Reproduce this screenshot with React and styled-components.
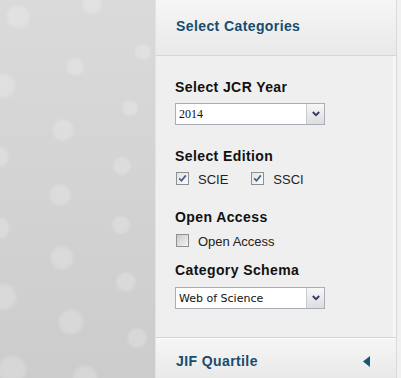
import React from "react";
import styled, { createGlobalStyle } from "styled-components";

const Global = createGlobalStyle`
  html, body { margin: 0; padding: 0; }
  body { font-family: "Liberation Sans", Arial, sans-serif; background: #d4d4d4; }
`;

const Page = styled.div`
  display: flex;
  width: 401px;
  height: 378px;
  overflow: hidden;
`;

const Backdrop = styled.div`
  width: 155px;
  flex: none;
  background: linear-gradient(#dadada, #cccccc);
  svg { display: block; }
`;

const Panel = styled.div`
  width: 242px;
  flex: none;
  box-sizing: border-box;
  display: flex;
  flex-direction: column;
  background: #efefef;
  border-left: 1px solid #e3e3e3;
  border-right: 1px solid #d9d9d9;
  box-shadow: inset -3px 0 0 #f6f6f6;
`;

const Strip = styled.div`
  flex: 1;
  background: #f1f1f1;
`;

const SectionHeader = styled.div`
  box-sizing: border-box;
  height: ${(p) => p.$h}px;
  padding: ${(p) => p.$pt}px 26px 0 20px;
  display: flex;
  justify-content: space-between;
  align-items: flex-start;
  background: linear-gradient(#f6f6f6, #e9e9e9);
  border-top: ${(p) => (p.$top ? "1px solid #d6d6d6" : "none")};
  border-bottom: ${(p) => (p.$top ? "none" : "1px solid #d6d6d6")};
  box-shadow: ${(p) => (p.$top ? "inset 0 1px 0 #fbfbfb" : "none")};
  font-size: 14px;
  letter-spacing: 0.4px;
  line-height: 15px;
  font-weight: bold;
  color: #174c6c;
`;

const Body = styled.div`
  flex: 1;
  padding: 24px 0 0 19px;
  display: flex;
  flex-direction: column;
`;

const Label = styled.div`
  font-size: 14px;
  letter-spacing: 0.4px;
  line-height: 15px;
  font-weight: bold;
  color: #111;
  margin-top: ${(p) => p.$mt || 0}px;
  margin-bottom: ${(p) => p.$mb || 8}px;
`;

const Dropdown = styled.div`
  box-sizing: border-box;
  width: 150px;
  height: 22px;
  border: 1px solid #a9aeb6;
  background: #fff;
  display: flex;
  align-items: stretch;
`;

const DropText = styled.span`
  flex: 1;
  padding-left: 3px;
  display: flex;
  align-items: center;
  color: #111;
  font-family: ${(p) => (p.$serif ? '"Liberation Serif", serif' : '"DejaVu Sans", sans-serif')};
  font-size: ${(p) => (p.$serif ? 12 : 11)}px;
`;

const DropButton = styled.span`
  width: 17px;
  border-left: 1px solid #c9cdd3;
  background: linear-gradient(#f7f7f7, #dcdde0);
  display: flex;
  align-items: center;
  justify-content: center;
`;

const CheckRow = styled.div`
  display: flex;
  gap: 22px;
  height: 15px;
`;

const CheckItem = styled.label`
  display: flex;
  align-items: flex-start;
  gap: 9px;
  font-size: 13px;
  line-height: 15px;
  color: #222;
`;

const Box = styled.span`
  box-sizing: border-box;
  width: 13px;
  height: 13px;
  margin-left: 1px;
  border: 1px solid #8e8f91;
  background: ${(p) =>
    p.$checked
      ? "linear-gradient(135deg, #e4e4e6, #fbfbfb)"
      : "linear-gradient(135deg, #c9c9c9, #f4f4f4)"};
  display: flex;
  align-items: center;
  justify-content: center;
`;

const Bubbles = () => {
  const dots = [
    [18, 17, 12], [92, 4, 10], [143, 52, 8], [75, 67, 9], [3, 86, 13],
    [130, 108, 8], [63, 130, 11], [-1, 157, 10], [122, 166, 9], [60, 195, 11],
    [-1, 228, 11], [121, 225, 9], [62, 258, 12], [126, 282, 10], [3, 297, 14],
    [71, 322, 13], [137, 338, 10], [12, 370, 15], [85, 378, 13],
  ];
  return (
    <svg width="155" height="378" viewBox="0 0 155 378">
      <defs>
        <radialGradient id="bub">
          <stop offset="0" stopColor="#fff" stopOpacity="0.22" />
          <stop offset="0.7" stopColor="#fff" stopOpacity="0.2" />
          <stop offset="1" stopColor="#fff" stopOpacity="0.02" />
        </radialGradient>
      </defs>
      {dots.map(([x, y, r], i) => (
        <circle key={i} cx={x} cy={y} r={r + 1} fill="url(#bub)" />
      ))}
    </svg>
  );
};

const Chevron = () => (
  <svg width="8" height="6" viewBox="0 0 8 6">
    <path d="M0.8 1 L4 4.2 L7.2 1" fill="none" stroke="#2d3b5c" strokeWidth="1.8" />
  </svg>
);

const Tick = () => (
  <svg width="9" height="9" viewBox="0 0 9 9">
    <path d="M1.2 4.4 L3.5 6.8 L7.8 1.4" fill="none" stroke="#4b5a8d" strokeWidth="1.7" />
  </svg>
);

const Select = ({ value, serif }) => (
  <Dropdown>
    <DropText $serif={serif}>{value}</DropText>
    <DropButton><Chevron /></DropButton>
  </Dropdown>
);

const Check = ({ checked, children }) => (
  <CheckItem>
    <Box $checked={checked}>{checked && <Tick />}</Box>
    {children}
  </CheckItem>
);

const LeftArrow = () => (
  <svg width="7" height="11" viewBox="0 0 7 11" style={{ marginTop: 2 }}>
    <path d="M7 0 L0 5.5 L7 11 Z" fill="#155778" />
  </svg>
);

export default function App() {
  return (
    <>
      <Global />
      <Page>
        <Backdrop><Bubbles /></Backdrop>
        <Panel>
          <SectionHeader $h={56} $pt={19}>Select Categories</SectionHeader>
          <Body>
            <Label>Select JCR Year</Label>
            <Select value="2014" serif />
            <Label $mt={24}>Select Edition</Label>
            <CheckRow>
              <Check checked>SCIE</Check>
              <Check checked>SSCI</Check>
            </CheckRow>
            <Label $mt={23} $mb={9}>Open Access</Label>
            <CheckRow>
              <Check>Open Access</Check>
            </CheckRow>
            <Label $mt={14} $mb={9}>Category Schema</Label>
            <Select value="Web of Science" />
          </Body>
          <SectionHeader $top $h={41} $pt={16}>
            <span>JIF Quartile</span>
            <LeftArrow />
          </SectionHeader>
        </Panel>
        <Strip />
      </Page>
    </>
  );
}
